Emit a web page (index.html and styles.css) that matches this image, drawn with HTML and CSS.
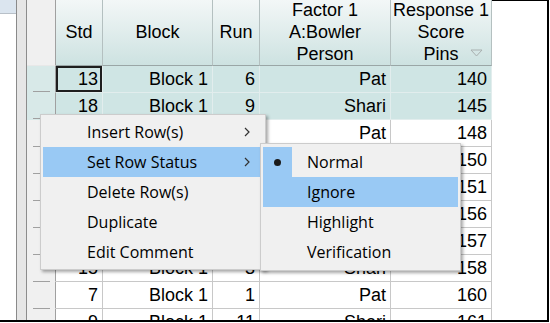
FILE: index.html
```
<!DOCTYPE html>
<html>
<head>
<meta charset="utf-8">
<link rel="stylesheet" href="styles.css">
</head>
<body>
<div class="frame">
  <div class="side"><div class="side-top"></div><div class="side-body"></div></div>
  <div class="gutter"></div>
  <div class="sheet">
    <div class="row head">
      <div class="c rh"></div>
      <div class="c std">Std</div>
      <div class="c blk">Block</div>
      <div class="c run">Run</div>
      <div class="c fac">Factor 1<br>A:Bowler<br>Person</div>
      <div class="c rsp">Response 1<br>Score<br>Pins<svg class="sort" width="13" height="8" viewBox="0 0 13 8"><path d="M1 1 L12 1 L6.5 7 Z" fill="none" stroke="#a9b0b0" stroke-width="1"/></svg></div>
    </div>
    <div class="row sel">
      <div class="c rh"></div><div class="c std cur">13</div><div class="c blk">Block 1</div><div class="c run">6</div><div class="c fac">Pat</div><div class="c rsp">140</div>
    </div>
    <div class="row sel">
      <div class="c rh"></div><div class="c std">18</div><div class="c blk">Block 1</div><div class="c run">9</div><div class="c fac">Shari</div><div class="c rsp">145</div>
    </div>
    <div class="row">
      <div class="c rh"></div><div class="c std">1</div><div class="c blk">Block 1</div><div class="c run">4</div><div class="c fac">Pat</div><div class="c rsp">148</div>
    </div>
    <div class="row">
      <div class="c rh"></div><div class="c std">16</div><div class="c blk">Block 1</div><div class="c run">10</div><div class="c fac">Shari</div><div class="c rsp">150</div>
    </div>
    <div class="row">
      <div class="c rh"></div><div class="c std">4</div><div class="c blk">Block 1</div><div class="c run">2</div><div class="c fac">Pat</div><div class="c rsp">151</div>
    </div>
    <div class="row">
      <div class="c rh"></div><div class="c std">12</div><div class="c blk">Block 1</div><div class="c run">8</div><div class="c fac">Shari</div><div class="c rsp">156</div>
    </div>
    <div class="row">
      <div class="c rh"></div><div class="c std">6</div><div class="c blk">Block 1</div><div class="c run">7</div><div class="c fac">Pat</div><div class="c rsp">157</div>
    </div>
    <div class="row">
      <div class="c rh"></div><div class="c std">15</div><div class="c blk">Block 1</div><div class="c run">3</div><div class="c fac">Shari</div><div class="c rsp">158</div>
    </div>
    <div class="row">
      <div class="c rh"></div><div class="c std">7</div><div class="c blk">Block 1</div><div class="c run">1</div><div class="c fac">Pat</div><div class="c rsp">160</div>
    </div>
    <div class="row">
      <div class="c rh"></div><div class="c std">9</div><div class="c blk">Block 1</div><div class="c run">11</div><div class="c fac">Shari</div><div class="c rsp">161</div>
    </div>
  </div>
  <div class="blank"></div>
</div>

<div class="menu">
  <div class="item">Insert Row(s)<svg class="arr" width="6" height="10" viewBox="0 0 6 10"><path d="M1 1 L5 5 L1 9" fill="none" stroke="#333" stroke-width="1.2"/></svg></div>
  <div class="item hot">Set Row Status<svg class="arr" width="6" height="10" viewBox="0 0 6 10"><path d="M1 1 L5 5 L1 9" fill="none" stroke="#333" stroke-width="1.2"/></svg></div>
  <div class="item">Delete Row(s)</div>
  <div class="item">Duplicate</div>
  <div class="item">Edit Comment</div>
</div>

<div class="submenu">
  <div class="sitem"><span class="check on"><span class="dot"></span></span><span class="lbl">Normal</span></div>
  <div class="sitem hot"><span class="check"></span><span class="lbl">Ignore</span></div>
  <div class="sitem"><span class="check"></span><span class="lbl">Highlight</span></div>
  <div class="sitem"><span class="check"></span><span class="lbl">Verification</span></div>
</div>
</body>
</html>
```

FILE: styles.css
```
* { box-sizing: content-box; }
html, body { margin: 0; padding: 0; }
body {
  width: 550px;
  height: 323px;
  overflow: hidden;
  background: #fff;
  position: relative;
  font-family: "Liberation Sans", Arial, sans-serif;
  color: #000;
}
.frame {
  display: flex;
  height: 320px;
  width: 549px;
  border-bottom: 2px solid #000;
  overflow: hidden;
}
.side {
  width: 16px;
  border-right: 1px solid #8a8a8a;
  display: flex;
  flex-direction: column;
  flex: none;
}
.side-top {
  height: 13px;
  background: #dbe5ef;
  border-bottom: 1px solid #b8c0c8;
}
.side-body { flex: 1; background: #fff; }
.gutter {
  width: 9px;
  flex: none;
  background: #e6e6e6;
  border-right: 1px solid #8c8c8c;
}
.sheet {
  display: flex;
  flex-direction: column;
  flex: none;
}
.row { display: flex; flex: none; }
.c {
  height: 26px;
  line-height: 26px;
  font-size: 18px;
  text-align: right;
  padding-right: 4px;
  border-right: 1px solid #c8c8c8;
  border-bottom: 1px solid #c8c8c8;
  white-space: nowrap;
  flex: none;
}
.rh {
  width: 28px;
  padding-right: 0;
  border-right: 1px solid #a0a0a0;
  border-bottom: 1px solid transparent;
  background: linear-gradient(#a0a0a0, #a0a0a0) 6px 100% / 17px 1px no-repeat, #f0f0f0;
  background-origin: border-box;
}
.std { width: 42px; }
.blk { width: 105px; }
.run { width: 42px; }
.fac { width: 126px; }
.rsp { width: 96px; }

.head .c {
  height: 63px;
  padding-bottom: 2px;
  padding-right: 0;
  line-height: 22px;
  display: flex;
  align-items: center;
  justify-content: center;
  text-align: center;
  background: linear-gradient(#f3f7f7, #cde2e1);
  border-right: 1px solid #b4c0c0;
  border-bottom: 1px solid #9aa6a6;
  position: relative;
}
.head .std { width: 46px; }
.head .blk { width: 109px; }
.head .run { width: 46px; }
.head .fac { width: 130px; }
.head .rsp { width: 100px; }
.head .rh {
  width: 28px;
  background: #f0f0f0;
  border-right: 1px solid #a0a0a0;
  border-bottom: 1px solid #e8e8e8;
}
.sort {
  position: absolute;
  right: 8px;
  top: 49px;
}

.sel .c {
  background: #cfe5e4;
  border-right-color: #e2eded;
  border-bottom-color: #e2eded;
}
.sel .rh {
  background: linear-gradient(#a0a0a0, #a0a0a0) 6px 100% / 17px 1px no-repeat, #d8e9e8;
  border-right-color: #a0a0a0;
  border-bottom-color: transparent;
}
.sel .cur {
  box-shadow: inset 0 0 0 2px #1e1e1e;
}

.blank {
  width: 55px;
  flex: none;
  background: #fff;
  border-right: 2px solid #000;
  border-top: 1px solid #000;
}

.menu {
  position: absolute;
  left: 40px;
  top: 114px;
  width: 220px;
  padding: 2px;
  background: #f0f0f0;
  border: 1px solid #cccccc;
  box-shadow: 2px 2px 3px rgba(0,0,0,0.35);
  font-family: "Open Sans", "Noto Sans", sans-serif;
  font-size: 16px;
}
.item {
  height: 30px;
  display: flex;
  align-items: center;
  padding-left: 44px;
  white-space: nowrap;
}
.item .arr {
  margin-left: auto;
  margin-right: 13px;
}
.hot { background: #99c9f4; }

.submenu {
  position: absolute;
  left: 260px;
  top: 143px;
  width: 195px;
  padding: 3px 2px;
  background: #f0f0f0;
  border: 1px solid #cccccc;
  box-shadow: 2px 2px 3px rgba(0,0,0,0.35);
  font-family: "Open Sans", "Noto Sans", sans-serif;
  font-size: 16px;
}
.sitem {
  height: 30px;
  display: flex;
  align-items: center;
  white-space: nowrap;
}
.check {
  width: 29px;
  height: 30px;
  flex: none;
  display: flex;
  align-items: center;
  justify-content: center;
}
.check.on { background: #99c9f4; }
.dot {
  width: 7px;
  height: 7px;
  border-radius: 50%;
  background: #1a1a1a;
  margin-left: -1px;
}
.lbl { margin-left: 15px; }
```
